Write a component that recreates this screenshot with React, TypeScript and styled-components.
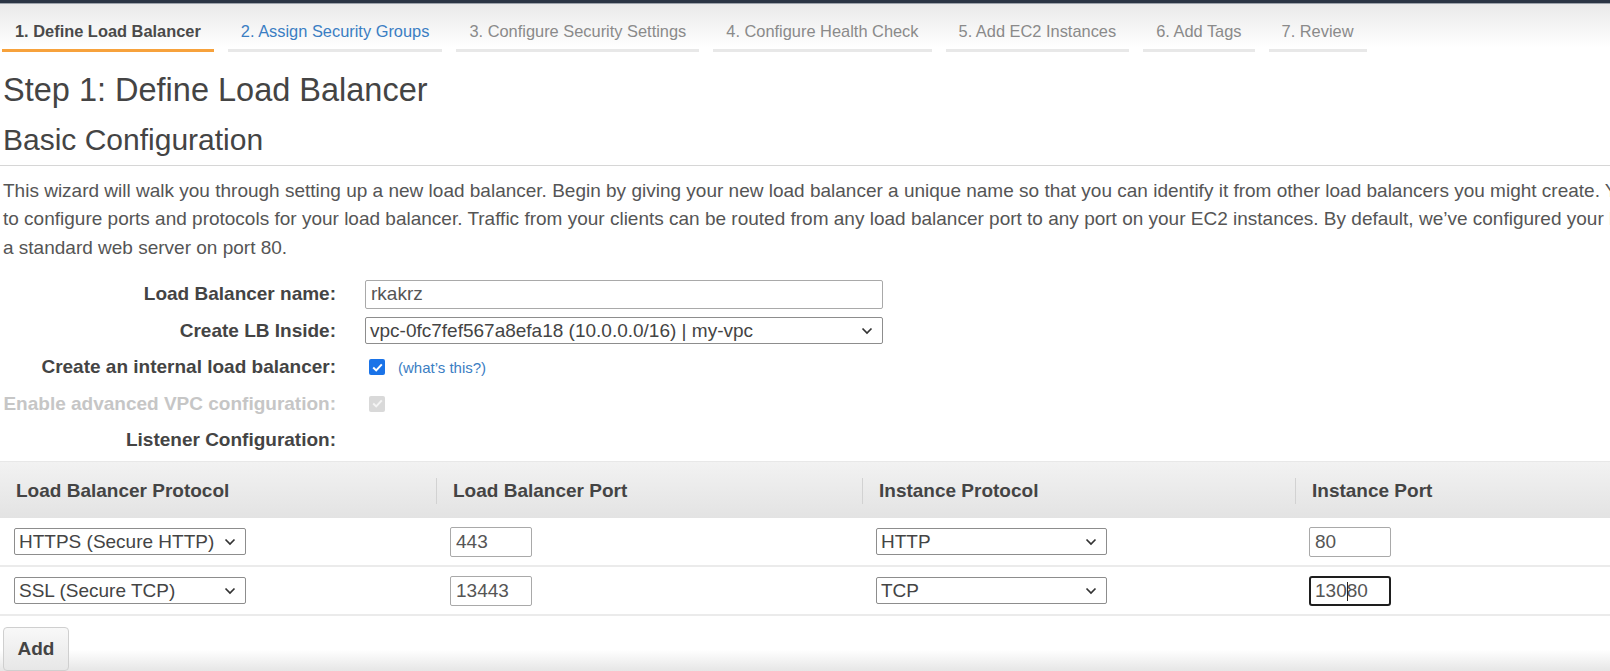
import React from 'react';
import styled, { createGlobalStyle } from 'styled-components';

const GlobalStyle = createGlobalStyle`
  html, body {
    margin: 0;
    padding: 0;
    overflow: hidden;
    background: #fff;
  }
  body {
    font-family: 'Liberation Sans', Arial, sans-serif;
    color: #444;
  }
`;

const Page = styled.div`
  width: 1720px;
  height: 671px;
  display: flex;
  flex-direction: column;
  background: linear-gradient(#fff 650px, #e6e6e6 671px);
`;

const TopBar = styled.div`
  height: 3px;
  flex: none;
  background: #2b3544;
  border-bottom: 1px solid #9da3ab;
`;

const TabStrip = styled.div`
  display: flex;
  flex: none;
  align-items: flex-end;
  gap: 14px;
  height: 48px;
  padding-left: 2px;
  background: linear-gradient(#e9e9e9, #fff 90%);
`;

const Tab = styled.div<{ $state: 'active' | 'next' | 'off' }>`
  padding: 0 13px 8px;
  font-size: 16.4px;
  line-height: 19px;
  white-space: nowrap;
  font-weight: ${p => (p.$state === 'active' ? 'bold' : 'normal')};
  color: ${p => (p.$state === 'active' ? '#4a4a4a' : p.$state === 'next' ? '#3b7ec3' : '#8a8a8a')};
  border-bottom: 3px solid ${p => (p.$state === 'active' ? '#f7a23c' : '#e8e8e8')};
`;

const Content = styled.div`
  padding: 0 3px;
`;

const Title = styled.h1`
  margin: 19px 0 0;
  font-size: 32.5px;
  line-height: 38px;
  font-weight: normal;
  color: #444;
`;

const SubTitle = styled.h2`
  margin: 14px 0 0;
  font-size: 30px;
  line-height: 34px;
  font-weight: normal;
  color: #444;
`;

const Rule = styled.hr`
  margin: 8px -3px 0;
  border: none;
  border-top: 1px solid #d6d6d6;
`;

const Intro = styled.p`
  margin: 11px 0 0;
  font-size: 19px;
  line-height: 28.3px;
  color: #555;
  white-space: nowrap;
`;

const FormGrid = styled.div`
  display: grid;
  grid-template-columns: 333px 518px;
  grid-auto-rows: 36.5px;
  column-gap: 29px;
  align-items: center;
  margin-top: 14px;
`;

const Label = styled.div<{ $muted?: boolean }>`
  text-align: right;
  font-weight: bold;
  font-size: 19px;
  white-space: nowrap;
  color: ${p => (p.$muted ? '#c6c6c6' : '#444')};
`;

const Field = styled.div`
  display: flex;
  align-items: center;
  gap: 13px;
`;

const TextBox = styled.input<{ $w?: number; $focus?: boolean }>`
  box-sizing: border-box;
  width: ${p => (p.$w ? `${p.$w}px` : '100%')};
  height: ${p => (p.$w ? '30px' : '29px')};
  padding: 0 ${p => (p.$focus ? '4px' : '5px')};
  font: 19px 'Liberation Sans', Arial, sans-serif;
  color: #555;
  background: #fff;
  border: ${p => (p.$focus ? '2px solid #1e1e1e' : '1px solid #a9a9a9')};
  border-radius: ${p => (p.$focus ? '3px' : '2px')};
  outline: none;
`;

const CaretWrap = styled.div`
  position: relative;
  display: inline-block;
`;

const Caret = styled.span`
  position: absolute;
  left: 38px;
  top: 6px;
  width: 1px;
  height: 19px;
  background: #222;
`;

const SelectBox = styled.div<{ $w?: number }>`
  box-sizing: border-box;
  display: flex;
  align-items: center;
  justify-content: space-between;
  width: ${p => (p.$w ? `${p.$w}px` : '100%')};
  height: 27px;
  padding: 0 9px 0 4px;
  font-size: 19px;
  color: #444;
  background: #fff;
  border: 1px solid #8d8d8d;
  border-radius: 2px;
  white-space: nowrap;
`;

const Chevron = () => (
  <svg width="12" height="8" viewBox="0 0 12 8">
    <path d="M1.5 1.5 L6 6 L10.5 1.5" fill="none" stroke="#333" strokeWidth="1.7" />
  </svg>
);

const Tick = ({ color }: { color: string }) => (
  <svg width="11" height="9" viewBox="0 0 11 9">
    <path d="M1.2 4.6 L4.2 7.4 L9.8 1.4" fill="none" stroke={color} strokeWidth="2" />
  </svg>
);

const Check = styled.span<{ $disabled?: boolean }>`
  display: inline-flex;
  align-items: center;
  justify-content: center;
  width: 16px;
  height: 16px;
  margin-left: 4px;
  border-radius: 2px;
  background: ${p => (p.$disabled ? '#d9d9d9' : '#1a73e8')};
`;

const HelpLink = styled.a`
  font-size: 15px;
  color: #3b7ec3;
  text-decoration: none;
`;

const Table = styled.div`
  margin-top: 3px;
`;

const columns = '436px 426px 433px 1fr';

const HeadRow = styled.div`
  box-sizing: border-box;
  display: grid;
  grid-template-columns: ${columns};
  height: 57px;
  align-items: center;
  background: linear-gradient(#f2f2f2, #e3e3e3);
  border-top: 1px solid #e8e8e8;
`;

const HeadCell = styled.div<{ $first?: boolean }>`
  padding-left: 16px;
  font-size: 19px;
  font-weight: bold;
  color: #444;
  line-height: 26px;
  margin-top: 2px;
  border-left: ${p => (p.$first ? 'none' : '1px solid #d2d2d2')};
`;

const BodyRow = styled.div`
  display: grid;
  grid-template-columns: ${columns};
  height: 47px;
  align-items: center;
  border-bottom: 2px solid #ebebeb;
`;

const Cell = styled.div`
  padding-left: 14px;
`;

const AddButton = styled.button`
  flex: none;
  align-self: flex-start;
  margin: 11px 0 0 3px;
  width: 66px;
  height: 44px;
  font: bold 19px 'Liberation Sans', Arial, sans-serif;
  color: #444;
  background: linear-gradient(#f8f8f8, #e7e7e7);
  border: 1px solid #cfcfcf;
  border-radius: 4px;
`;

const tabs: { label: string; state: 'active' | 'next' | 'off' }[] = [
  { label: '1. Define Load Balancer', state: 'active' },
  { label: '2. Assign Security Groups', state: 'next' },
  { label: '3. Configure Security Settings', state: 'off' },
  { label: '4. Configure Health Check', state: 'off' },
  { label: '5. Add EC2 Instances', state: 'off' },
  { label: '6. Add Tags', state: 'off' },
  { label: '7. Review', state: 'off' },
];

const introLines = [
  'This wizard will walk you through setting up a new load balancer. Begin by giving your new load balancer a unique name so that you can identify it from other load balancers you might create. You will also need',
  'to configure ports and protocols for your load balancer. Traffic from your clients can be routed from any load balancer port to any port on your EC2 instances. By default, we\u2019ve configured your load balancer with',
  'a standard web server on port 80.',
];

const listeners = [
  { lbProto: 'HTTPS (Secure HTTP)', lbPort: '443', instProto: 'HTTP', instPort: '80', focus: false },
  { lbProto: 'SSL (Secure TCP)', lbPort: '13443', instProto: 'TCP', instPort: '13080', focus: true },
];

const App = () => {
  return (
    <Page>
      <GlobalStyle />
      <TopBar />
      <TabStrip>
        {tabs.map(t => (
          <Tab key={t.label} $state={t.state}>{t.label}</Tab>
        ))}
      </TabStrip>
      <Content>
        <Title>Step 1: Define Load Balancer</Title>
        <SubTitle>Basic Configuration</SubTitle>
        <Rule />
        <Intro>
          {introLines.map((l, i) => (
            <React.Fragment key={i}>
              {l}
              {i < introLines.length - 1 && <br />}
            </React.Fragment>
          ))}
        </Intro>
        <FormGrid>
          <Label>Load Balancer name:</Label>
          <Field><TextBox defaultValue="rkakrz" /></Field>
          <Label>Create LB Inside:</Label>
          <Field>
            <SelectBox>vpc-0fc7fef567a8efa18 (10.0.0.0/16) | my-vpc<Chevron /></SelectBox>
          </Field>
          <Label>Create an internal load balancer:</Label>
          <Field>
            <Check><Tick color="#fff" /></Check>
            <HelpLink href="#">(what&#8217;s this?)</HelpLink>
          </Field>
          <Label $muted>Enable advanced VPC configuration:</Label>
          <Field>
            <Check $disabled><Tick color="#f4f4f4" /></Check>
          </Field>
          <Label>Listener Configuration:</Label>
          <Field />
        </FormGrid>
      </Content>
      <Table>
        <HeadRow>
          <HeadCell $first>Load Balancer Protocol</HeadCell>
          <HeadCell>Load Balancer Port</HeadCell>
          <HeadCell>Instance Protocol</HeadCell>
          <HeadCell>Instance Port</HeadCell>
        </HeadRow>
        {listeners.map(r => (
          <BodyRow key={r.lbPort}>
            <Cell><SelectBox $w={232}>{r.lbProto}<Chevron /></SelectBox></Cell>
            <Cell><TextBox $w={82} defaultValue={r.lbPort} /></Cell>
            <Cell><SelectBox $w={231}>{r.instProto}<Chevron /></SelectBox></Cell>
            <Cell>
              {r.focus ? (
                <CaretWrap>
                  <TextBox $w={82} defaultValue={r.instPort} $focus />
                  <Caret />
                </CaretWrap>
              ) : (
                <TextBox $w={82} defaultValue={r.instPort} />
              )}
            </Cell>
          </BodyRow>
        ))}
      </Table>
      <AddButton>Add</AddButton>
    </Page>
  );
};

export default App;
